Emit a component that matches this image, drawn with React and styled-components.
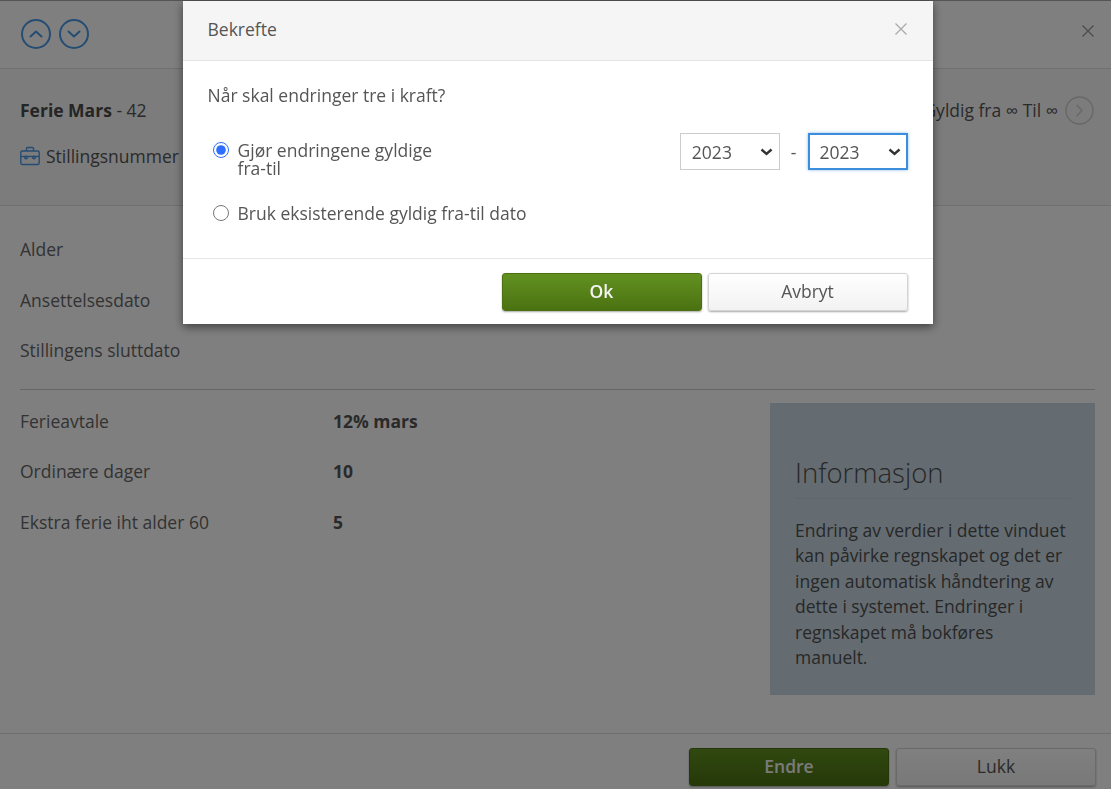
import React from 'react';
import styled, { createGlobalStyle } from 'styled-components';

const GlobalStyle = createGlobalStyle`
	html, body {
		margin: 0;
		padding: 0;
		height: 100%;
		overflow: hidden;
	}
	body {
		font-family: "Open Sans", "Liberation Sans", sans-serif;
		font-size: 17.5px;
		color: #555;
		background: #fff;
	}
	* {
		box-sizing: border-box;
	}
`

const Page = styled.div`
	display: flex;
	flex-direction: column;
	height: 789px;
	width: 1111px;
	background: #fff;
`
const Toolbar = styled.div`
	display: flex;
	align-items: center;
	justify-content: space-between;
	height: 69px;
	padding: 0 16px 0 21px;
	border-bottom: 1px solid #e0e0e0;
`
const NavButtons = styled.div`
	display: flex;
	gap: 8px;
`
const CloseSlot = styled.div`
	display: flex;
	margin-bottom: 6px;
`
const Summary = styled.div`
	display: flex;
	flex-direction: column;
	gap: 20px;
	height: 137px;
	padding: 27px 17px 0 20px;
	border-bottom: 1px solid #e0e0e0;
	background: #f8f8f8;
`
const SummaryRow = styled.div`
	display: flex;
	align-items: center;
	justify-content: space-between;
	height: 28px;
`
const Title = styled.div`
	color: #555;
	strong {
		font-weight: 700;
		color: #4a4a4a;
	}
`
const Validity = styled.div`
	display: flex;
	align-items: center;
	gap: 7px;
	color: #555;
`
const Position = styled.div`
	display: flex;
	align-items: center;
	gap: 6px;
	color: #555;
`
const Content = styled.div`
	flex: 1;
	padding: 18px 16px 0 20px;
`
const DataGroup = styled.div`
	display: flex;
	flex-direction: column;
	padding-bottom: 13px;
`
const Divider = styled.hr`
	margin: 0 0 5px;
	border: 0;
	border-top: 1px solid #ccc;
`
const Split = styled.div`
	display: flex;
	justify-content: space-between;
	align-items: flex-start;
`
const ValueList = styled.div`
	padding-top: 1px;
`
const DataRow = styled.div`
	display: grid;
	grid-template-columns: 313px auto;
	align-items: center;
	height: 50.5px;
	color: #666;
	b {
		color: #555;
		font-weight: 700;
	}
`
const InfoBox = styled.aside`
	width: 325px;
	height: 292px;
	margin-top: 8px;
	padding: 53px 25px 0;
	background: #c9d8e3;
	color: #4f4f4f;
`
const InfoTitle = styled.h3`
	margin: 0 0 19px;
	padding-bottom: 8px;
	font-size: 27.5px;
	line-height: 34px;
	font-weight: 300;
	border-bottom: 1px solid #c2ccd5;
`
const InfoText = styled.p`
	margin: 0;
	line-height: 25.6px;
`
const Footer = styled.div`
	display: flex;
	justify-content: flex-end;
	gap: 7px;
	height: 56px;
	padding: 14px 15px 0 0;
	border-top: 1px solid #ddd;
`
const Button = styled.button`
	width: 200px;
	height: 38px;
	padding: 0 0 2px;
	border-radius: 3px;
	font-family: inherit;
	font-size: 17.5px;
	cursor: pointer;
	border: 1px solid ${props => props.$primary ? '#4a7012' : '#d4d4d4'};
	color: ${props => props.$primary ? '#f4f4f4' : '#555'};
	font-weight: ${props => props.$primary ? 600 : 400};
	background: ${props => props.$primary
		? 'linear-gradient(#629120, #4b7212)'
		: 'linear-gradient(#fff, #f2f2f2)'};
	box-shadow: 0 1px 2px rgba(0, 0, 0, 0.35);
`
const Overlay = styled.div`
	position: fixed;
	inset: 0;
	padding-left: 4px;
	border-top: 1px solid #555;
	background: rgba(0, 0, 0, 0.5);
`
const Modal = styled.div`
	width: 750px;
	height: 323px;
	margin: 0 auto;
	background: #fff;
	box-shadow: 0 3px 9px rgba(0, 0, 0, 0.5);
	display: flex;
	flex-direction: column;
`
const ModalHeader = styled.div`
	display: flex;
	align-items: center;
	justify-content: space-between;
	height: 60px;
	padding: 0 25px 3px 25px;
	background: #f5f5f5;
	border-bottom: 1px solid #e5e5e5;
	color: #555;
`
const ModalBody = styled.div`
	flex: 1;
	padding: 20px 25px 0;
	p {
		margin: 0 0 32px;
		line-height: 28px;
	}
`
const OptionRow = styled.div`
	display: flex;
	justify-content: space-between;
	align-items: flex-start;
	height: 63px;
`
const RadioLabel = styled.label`
	display: flex;
	align-items: flex-start;
	gap: 9px;
	padding-left: 5px;
	width: ${props => props.$narrow ? '240px' : 'auto'};
	line-height: 18px;
	input {
		width: 16px;
		height: 16px;
		margin: 1px 0 0;
		flex: none;
		accent-color: #2f6fff;
	}
`
const YearRange = styled.div`
	display: flex;
	align-items: center;
	gap: 11px;
	margin-top: -8px;
	color: #555;
`
const chevron = encodeURIComponent('<svg xmlns="http://www.w3.org/2000/svg" width="13" height="8" viewBox="0 0 13 8" fill="none" stroke="#333" stroke-width="2.4"><path d="M1.5 1.5 L6.5 6 L11.5 1.5"/></svg>')
const YearSelect = styled.select`
	appearance: none;
	width: 100px;
	height: 37px;
	padding: 0 0 0 ${props => props.$focused ? '10px' : '11px'};
	font-family: inherit;
	font-size: 17.5px;
	color: #555;
	background: #fff url("data:image/svg+xml,${chevron}") no-repeat right ${props => props.$focused ? '5px' : '6px'} center;
	border: ${props => props.$focused ? '2px solid #3c8ddc' : '1px solid #ccc'};
	border-radius: 0;
	outline: none;
	box-shadow: ${props => props.$focused ? '0 0 3px rgba(60, 141, 220, 0.6)' : 'none'};
`
const ModalFooter = styled.div`
	display: flex;
	justify-content: flex-end;
	gap: 6px;
	height: 66px;
	padding: 14px 25px 0 0;
	border-top: 1px solid #e5e5e5;
`
const IconBtn = styled.span`
	display: inline-flex;
	color: ${props => props.$color};
`

const CircleChevron = ({ dir, size = 30, color = '#4a9ae8', width = 2 }) => {
	const paths = {
		up: 'M9.5 17.5 L15 12.5 L20.5 17.5',
		down: 'M9.5 12.5 L15 17.5 L20.5 12.5',
		right: 'M12.5 9.5 L17.5 15 L12.5 20.5',
	}
	return (
		<IconBtn $color={color}>
			<svg width={size} height={size} viewBox="0 0 30 30" fill="none" stroke="currentColor" strokeWidth={width}>
				<circle cx="15" cy="15" r="14" />
				<path d={paths[dir]} strokeLinecap="round" strokeLinejoin="round" />
			</svg>
		</IconBtn>
	)
}

const CloseIcon = ({ color }) => (
	<IconBtn $color={color}>
		<svg width="14" height="14" viewBox="0 0 14 14" fill="none" stroke="currentColor" strokeWidth="1.3">
			<path d="M1.5 1.5 L12.5 12.5 M12.5 1.5 L1.5 12.5" />
		</svg>
	</IconBtn>
)

const CaseIcon = () => (
	<IconBtn $color="#4a9ae8">
		<svg width="20" height="20" viewBox="0 0 20 20" fill="none" stroke="currentColor" strokeWidth="1.4">
			<rect x="0.8" y="5" width="18.4" height="13.5" rx="1.5" />
			<path d="M6.5 5 V2.5 a1 1 0 0 1 1 -1 h5 a1 1 0 0 1 1 1 V5" />
			<path d="M1 10.5 H19" />
			<circle cx="6" cy="11.5" r="1.3" />
			<circle cx="14" cy="11.5" r="1.3" />
		</svg>
	</IconBtn>
)

const fixedRows = ['Alder', 'Ansettelsesdato', 'Stillingens sluttdato']
const valueRows = [
	['Ferieavtale', '12% mars'],
	['Ordinære dager', '10'],
	['Ekstra ferie iht alder 60', '5'],
]

const App = () => {
	return (
		<>
			<GlobalStyle />
			<Page>
				<Toolbar>
					<NavButtons>
						<CircleChevron dir="up" />
						<CircleChevron dir="down" />
					</NavButtons>
					<CloseSlot><CloseIcon color="#999" /></CloseSlot>
				</Toolbar>
				<Summary>
					<SummaryRow>
						<Title><strong>Ferie Mars</strong> - 42</Title>
						<Validity>
							Gyldig fra ∞ Til ∞
							<CircleChevron dir="right" color="#d0d0d0" size={29} width={1.5} />
						</Validity>
					</SummaryRow>
					<Position><CaseIcon /> Stillingsnummer</Position>
				</Summary>
				<Content>
					<DataGroup>
						{fixedRows.map(label => <DataRow key={label}>{label}</DataRow>)}
					</DataGroup>
					<Divider />
					<Split>
						<ValueList>
							{valueRows.map(([label, value]) => (
								<DataRow key={label}>{label}<b>{value}</b></DataRow>
							))}
						</ValueList>
						<InfoBox>
							<InfoTitle>Informasjon</InfoTitle>
							<InfoText>
								Endring av verdier i dette vinduet kan påvirke regnskapet og det er ingen automatisk håndtering av dette i systemet. Endringer i regnskapet må bokføres manuelt.
							</InfoText>
						</InfoBox>
					</Split>
				</Content>
				<Footer>
					<Button $primary>Endre</Button>
					<Button>Lukk</Button>
				</Footer>
			</Page>
			<Overlay>
				<Modal>
					<ModalHeader>
						Bekrefte
						<CloseIcon color="#aaa" />
					</ModalHeader>
					<ModalBody>
						<p>Når skal endringer tre i kraft?</p>
						<OptionRow>
							<RadioLabel $narrow>
								<input type="radio" name="validity" defaultChecked />
								<span>Gjør endringene gyldige fra-til</span>
							</RadioLabel>
							<YearRange>
								<YearSelect defaultValue="2023"><option>2023</option></YearSelect>
								-
								<YearSelect $focused defaultValue="2023"><option>2023</option></YearSelect>
							</YearRange>
						</OptionRow>
						<RadioLabel>
							<input type="radio" name="validity" />
							<span>Bruk eksisterende gyldig fra-til dato</span>
						</RadioLabel>
					</ModalBody>
					<ModalFooter>
						<Button $primary>Ok</Button>
						<Button>Avbryt</Button>
					</ModalFooter>
				</Modal>
			</Overlay>
		</>
	)
}

export default App;
